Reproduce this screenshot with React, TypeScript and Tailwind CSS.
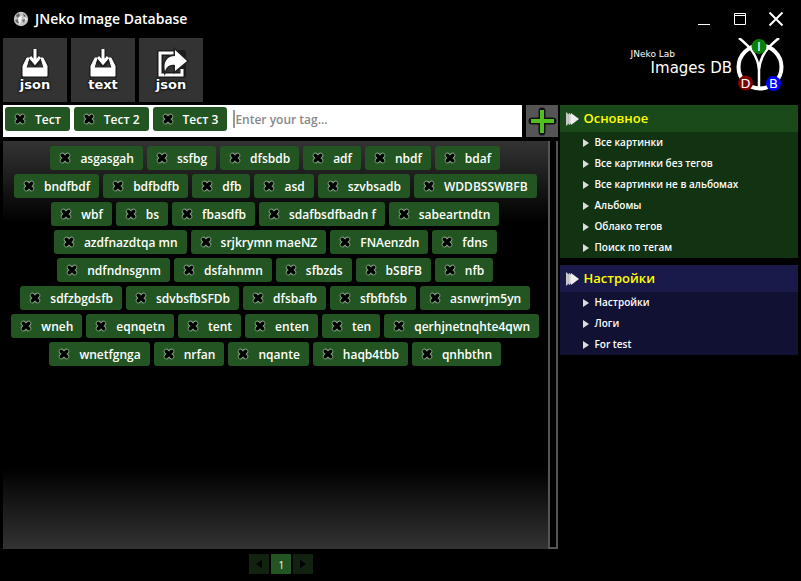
import React from "react";

const removableTags = ["Тест", "Тест 2", "Тест 3"];

const tagRows = [
  ["asgasgah", "ssfbg", "dfsbdb", "adf", "nbdf", "bdaf"],
  ["bndfbdf", "bdfbdfb", "dfb", "asd", "szvbsadb", "WDDBSSWBFB"],
  ["wbf", "bs", "fbasdfb", "sdafbsdfbadn f", "sabeartndtn"],
  ["azdfnazdtqa mn", "srjkrymn maeNZ", "FNAenzdn", "fdns"],
  ["ndfndnsgnm", "dsfahnmn", "sfbzds", "bSBFB", "nfb"],
  ["sdfzbgdsfb", "sdvbsfbSFDb", "dfsbafb", "sfbfbfsb", "asnwrjm5yn"],
  ["wneh", "eqnqetn", "tent", "enten", "ten", "qerhjnetnqhte4qwn"],
  ["wnetfgnga", "nrfan", "nqante", "haqb4tbb", "qnhbthn"],
];

const mainLinks = [
  "Все картинки",
  "Все картинки без тегов",
  "Все картинки не в альбомах",
  "Альбомы",
  "Облако тегов",
  "Поиск по тегам",
];

const settingsLinks = ["Настройки", "Логи", "For test"];

function CrossIcon() {
  return (
    <svg viewBox="0 0 12 12" className="size-3" aria-hidden="true">
      <path d="M3.5 3.5L8.5 8.5M8.5 3.5L3.5 8.5" stroke="#86a686" strokeWidth="5.5" strokeLinecap="round" />
      <path d="M3.2 3.2L8.8 8.8M8.8 3.2L3.2 8.8" stroke="#000" strokeWidth="3.4" strokeLinecap="round" />
      <path d="M4 4H8V8H4Z" fill="#000" />
    </svg>
  );
}

function Tag({ label }: { label: string }) {
  return (
    <span className="flex h-6 shrink-0 items-center gap-[9px] rounded-[3px] bg-[#225522] px-[9px] text-xs font-semibold whitespace-nowrap text-white">
      <button type="button" aria-label={"Remove " + label}>
        <CrossIcon />
      </button>
      <span className="pt-0.5">{label}</span>
    </span>
  );
}

function SaveIcon() {
  return (
    <svg viewBox="0 0 64 64" className="size-16" aria-hidden="true">
      <g fill="none" stroke="#111" strokeWidth="6" opacity="0.6" strokeLinejoin="round">
        <path d="M25 21L21 29V37H43V29L39 21M32 11V25M26 19L32 26L38 19" />
      </g>
      <path d="M26 20H24L20 28V38H44V28L40 20H38L41 30H23Z" fill="#fff" stroke="#fff" />
      <path d="M32 11V24M27 19L32 25L37 19" fill="none" stroke="#fff" strokeWidth="3" />
    </svg>
  );
}

function ShareIcon() {
  return (
    <svg viewBox="0 0 64 64" className="size-16" aria-hidden="true">
      <path d="M21 15H44V37H21Z" fill="none" stroke="#1c1c1c" strokeWidth="6" strokeLinejoin="round" />
      <path d="M36 15H21V37H43V31" fill="none" stroke="#fff" strokeWidth="3" />
      <path
        d="M36 12L48 23L36 33V27C31 26 28 28 26 33C24 24 28 18 36 18Z"
        fill="#fff"
        stroke="#222"
        strokeWidth="3"
        paintOrder="stroke"
      />
    </svg>
  );
}

function ToolButton({ label, kind }: { label: string; kind: "save" | "share" }) {
  return (
    <button type="button" className="relative size-16 bg-[#333333] text-white">
      {kind === "save" ? <SaveIcon /> : <ShareIcon />}
      <span className="absolute inset-x-0 bottom-[9px] text-center font-['DejaVu_Sans',sans-serif] text-[13px] leading-4 font-bold [text-shadow:0_0_3px_#000,0_0_2px_#000]">
        {label}
      </span>
    </button>
  );
}

function AppIcon() {
  return (
    <svg viewBox="0 0 16 16" className="size-4" aria-hidden="true">
      <circle cx="8" cy="8" r="7.2" fill="#c4c4c4" />
      <path d="M3 4L6 2L7 5L4 7ZM10 2L13 5L11 6ZM2 9L5 8L6 12L4 12ZM9 9L12 8L11 12Z" fill="#666" />
      <path d="M6 6L9 5L8 10L7 14L5 9ZM11 6L14 8L13 10Z" fill="#f4f4f4" />
    </svg>
  );
}

function Logo() {
  return (
    <div className="flex pr-3.5 text-white">
      <div className="flex flex-col pt-2.5 pr-1 font-['DejaVu_Sans',sans-serif]">
        <span className="text-[9px] leading-3">JNeko Lab</span>
        <span className="pl-5 text-[15px] leading-4">Images DB</span>
      </div>
      <svg viewBox="0 0 48 56" className="h-14 w-12" role="img" aria-label="IDB">
        <circle cx="24" cy="29" r="21.5" fill="none" stroke="#fff" strokeWidth="4" />
        <path d="M3 0C13 8 22 17 23 32V50M43 0C33 8 24 17 23 32" fill="none" stroke="#fff" strokeWidth="2.5" />
        <circle cx="23" cy="8.5" r="7.5" fill="#0a800a" />
        <circle cx="9.5" cy="45" r="7.5" fill="#800000" />
        <circle cx="37.5" cy="45.5" r="7.5" fill="#0000ff" />
        <g fill="#fff" fontFamily="DejaVu Sans" fontSize="13" textAnchor="middle">
          <text x="23" y="13">I</text>
          <text x="9.5" y="50">D</text>
          <text x="37.5" y="50">B</text>
        </g>
      </svg>
    </div>
  );
}

function MenuSection({ title, links, tone }: { title: string; links: string[]; tone: "green" | "blue" }) {
  const green = tone === "green";
  return (
    <nav aria-label={title} className={green ? "bg-[#113311]" : "bg-[#111133]"}>
      <h2
        className={
          "flex h-[27px] items-center gap-1 pl-[5px] text-[13px] font-semibold text-[#ffff00] " +
          (green ? "bg-[#1a4a1a]" : "bg-[#1a1a4a]")
        }
      >
        <svg viewBox="0 0 15 14" className="h-3.5 w-[15px]" aria-hidden="true">
          <path d="M1 0L9 7L1 14Z" fill="#c8c8c8" />
          <path d="M4 1L11 7L4 13Z" fill="#ddd" stroke="#aaa" strokeWidth="0.5" />
          <path d="M6 1L14 7L6 13Z" fill="#eee" />
        </svg>
        {title}
      </h2>
      <ul>
        {links.map((link) => (
          <li key={link}>
            <a href="#" className="flex h-[21px] items-center gap-1.5 pl-[23px] text-[10px] font-semibold text-white">
              <svg viewBox="0 0 6 8" className="h-2 w-1.5" aria-hidden="true">
                <path d="M0 0L6 4L0 8Z" fill="#ddd" />
              </svg>
              {link}
            </a>
          </li>
        ))}
      </ul>
    </nav>
  );
}

export default function App() {
  return (
    <div className="flex min-h-screen flex-col bg-black px-[3px] font-['Open_Sans','Noto_Sans',sans-serif]">
      <header className="flex h-[38px] items-center justify-between pr-3.5 pl-2.5">
        <h1 className="flex items-center gap-1.5 text-sm font-semibold text-white">
          <AppIcon />
          JNeko Image Database
        </h1>
        <div className="flex gap-5 text-white">
          <button type="button" aria-label="Minimize">
            <svg viewBox="0 0 16 16" className="size-4" aria-hidden="true">
              <path d="M2 13.5H14" stroke="currentColor" />
            </svg>
          </button>
          <button type="button" aria-label="Maximize">
            <svg viewBox="0 0 16 16" className="size-4" aria-hidden="true">
              <path d="M2.5 2.5H13.5V13.5H2.5ZM2.5 4.5H13.5" fill="none" stroke="currentColor" />
            </svg>
          </button>
          <button type="button" aria-label="Close">
            <svg viewBox="0 0 16 16" className="size-4" aria-hidden="true">
              <path d="M1.5 1.5L14.5 14.5M14.5 1.5L1.5 14.5" stroke="currentColor" strokeWidth="2" />
            </svg>
          </button>
        </div>
      </header>

      <div className="flex h-[67px] justify-between">
        <div className="flex gap-1">
          <ToolButton label="json" kind="save" />
          <ToolButton label="text" kind="save" />
          <ToolButton label="json" kind="share" />
        </div>
        <Logo />
      </div>

      <div className="flex flex-1 gap-0.5">
        <main className="flex min-w-0 flex-1 flex-col">
          <div className="flex gap-1">
            <div className="flex h-8 min-w-0 flex-1 gap-1 bg-white px-0.5 pt-0.5">
              {removableTags.map((tag) => (
                <Tag key={tag} label={tag} />
              ))}
              <input
                type="text"
                aria-label="Enter your tag"
                placeholder="Enter your tag..."
                className="mt-[3px] ml-0.5 h-[18px] min-w-0 flex-1 border-l-2 border-[#999999] text-xs font-semibold text-black outline-none placeholder:text-[#888888]"
              />
            </div>
            <button type="button" aria-label="Add tag" className="size-8 bg-[#555555]">
              <svg viewBox="0 0 32 32" className="size-8" aria-hidden="true">
                <path d="M16 6V27M6 16H27" stroke="#111" strokeWidth="7" strokeLinecap="round" />
                <path d="M16 5V28M5 16H28" stroke="#4fc01f" strokeWidth="4" />
              </svg>
            </button>
          </div>

          <div className="mt-1 flex flex-1 bg-[linear-gradient(#333333,#000000_20%,#000000_80%,#333333)]">
            <div className="flex min-w-0 flex-1 flex-col gap-1 pt-[5px]">
              {tagRows.map((row) => (
                <div key={row[0]} className="flex justify-center gap-1">
                  {row.map((tag) => (
                    <Tag key={tag} label={tag} />
                  ))}
                </div>
              ))}
            </div>
            <div className="w-2.5 border-x-2 border-b-2 border-[#555555] bg-black" />
          </div>

          <div className="flex h-8 justify-center gap-0.5 pt-[5px] pl-0.5">
            <button type="button" aria-label="Previous page" className="flex size-5 items-center justify-center bg-[#112211]">
              <svg viewBox="0 0 6 8" className="h-2 w-1.5" aria-hidden="true">
                <path d="M6 0L0 4L6 8Z" />
              </svg>
            </button>
            <button type="button" className="flex size-5 items-center justify-center bg-[#225522] pt-0.5 text-[10px] text-white">
              1
            </button>
            <button type="button" aria-label="Next page" className="flex size-5 items-center justify-center bg-[#112211]">
              <svg viewBox="0 0 6 8" className="h-2 w-1.5" aria-hidden="true">
                <path d="M0 0L6 4L0 8Z" />
              </svg>
            </button>
          </div>
        </main>

        <aside className="flex w-[30%] flex-col gap-[7px]">
          <MenuSection title="Основное" links={mainLinks} tone="green" />
          <MenuSection title="Настройки" links={settingsLinks} tone="blue" />
        </aside>
      </div>
    </div>
  );
}
